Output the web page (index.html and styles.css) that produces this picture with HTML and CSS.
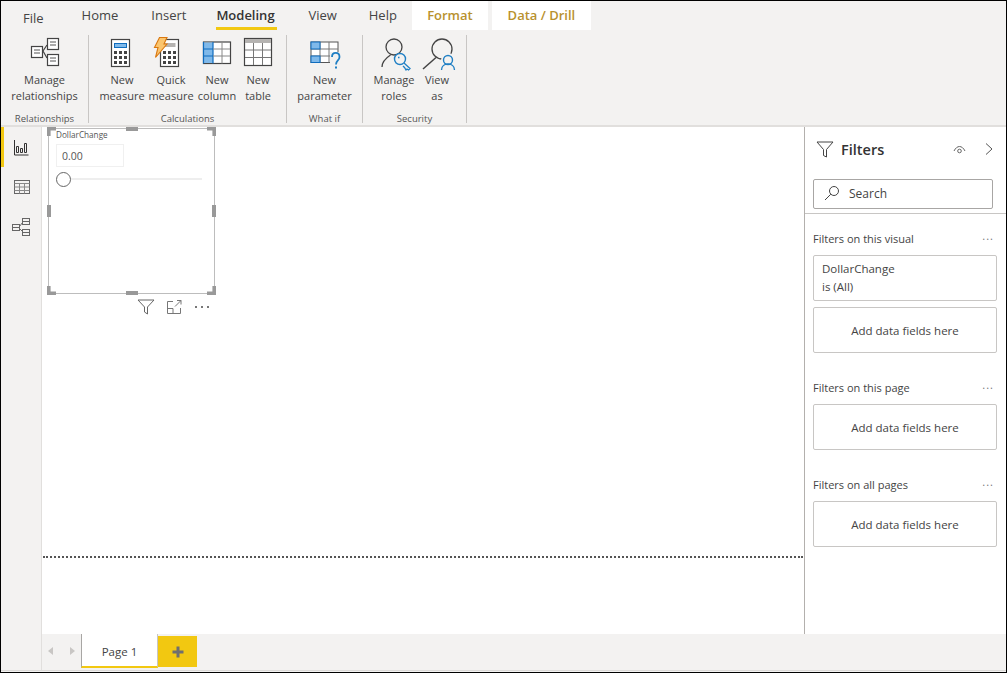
FILE: index.html
```html
<!doctype html>
<html lang="en">
  <head>
    <meta charset="UTF-8" />
    <meta name="viewport" content="width=device-width, initial-scale=1" />
    <title>Power BI Desktop</title>
    <link rel="stylesheet" href="styles.css">
  </head>
  <body>
    <div class="app">
      <!-- tabs -->
      <div class="tabs">
        <span class="tab tab-file">File</span>
        <span class="tab tab-home">Home</span>
        <span class="tab tab-insert">Insert</span>
        <span class="tab tab-modeling">Modeling</span>
        <span class="tab tab-view">View</span>
        <span class="tab tab-help">Help</span>
        <span class="tab tab-context tab-format">Format</span>
        <span class="tab tab-context tab-drill">Data / Drill</span>
      </div>

      <!-- ribbon -->
      <div class="ribbon">
        <div class="group group-rel">
          <div class="group-items">
            <div class="item item-rel">
              <svg class="icon" width="30" height="34" viewBox="0 0 30 34">
                <g fill="#fff" stroke="#444" stroke-width="1.2">
                  <rect x="1.5" y="10.5" width="11" height="11" />
                  <rect x="17.5" y="2.5" width="11" height="11" />
                  <rect x="17.5" y="18.5" width="11" height="11" />
                </g>
                <path d="M17 9 L13 15 L17 22" fill="none" stroke="#444" stroke-width="1.2" />
                <path d="M4 14h6M4 17h6M20 6h6M20 9h6M20 22h6M20 25h6" stroke="#555" stroke-width="1" />
              </svg>
              <span class="item-label">Manage<br>relationships</span>
            </div>
          </div>
          <div class="group-label">Relationships</div>
        </div>

        <div class="group group-calc">
          <div class="group-items">
            <div class="item item-measure">
              <svg class="icon" width="30" height="34" viewBox="0 0 30 34">
                <rect x="4.500" y="3.500" width="18" height="27" fill="#fff" stroke="#444" stroke-width="1.2" />
                <rect x="7.500" y="7.500" width="12" height="4" fill="#7fb9ea" stroke="#0f6cbd" />
                <path d="M7 15h3v3H7zM12 15h3v3h-3zM17 15h3v3h-3zM7 20h3v3H7zM12 20h3v3h-3zM17 20h3v3h-3zM7 25h3v3H7zM12 25h3v3h-3zM17 25h3v3h-3z" fill="#444" />
              </svg>
              <span class="item-label">New<br>measure</span>
            </div>
            <div class="item item-quick">
              <svg class="icon" width="30" height="34" viewBox="0 0 30 34">
                <rect x="4.500" y="3.500" width="18" height="27" fill="#fff" stroke="#444" stroke-width="1.2" />
                <rect x="7.500" y="7" width="12" height="4" fill="#b5b3b1" />
                <path d="M7 15h3v3H7zM12 15h3v3h-3zM17 15h3v3h-3zM7 20h3v3H7zM12 20h3v3h-3zM17 20h3v3h-3zM7 25h3v3H7zM12 25h3v3h-3zM17 25h3v3h-3z" fill="#444" />
                <path d="M3.500 1.500h7.500l-3 6.500h3L-0.500 21.500l2.500-10H-1.500z" fill="#fbc56d" stroke="#d9770f" stroke-width="1.100" />
              </svg>
              <span class="item-label">Quick<br>measure</span>
            </div>
            <div class="item item-column">
              <svg class="icon" width="30" height="34" viewBox="0 0 30 34">
                <rect x="1.500" y="6" width="27" height="21.500" fill="#fff" stroke="#444" stroke-width="1.2" />
                <rect x="2" y="6.500" width="9" height="20.500" fill="#7fb9ea" />
                <path d="M11 6v21.500M2 13h9M2 20h9" stroke="#0f6cbd" stroke-width="1.2" fill="none" />
                <path d="M20 6v21.500M11 13h17M11 20h17" stroke="#888" stroke-width="1" fill="none" />
                <path d="M1.500 6v21.500" stroke="#0f6cbd" stroke-width="1.2" />
              </svg>
              <span class="item-label">New<br>column</span>
            </div>
            <div class="item item-table">
              <svg class="icon" width="30" height="34" viewBox="0 0 30 34">
                <rect x="1.500" y="2.500" width="27" height="27" fill="#fff" stroke="#444" stroke-width="1.2" />
                <rect x="2" y="3" width="26" height="4" fill="#b5b3b1" />
                <path d="M10.500 7v22M19.500 7v22M2 14h26M2 21.500h26" stroke="#777" stroke-width="1" fill="none" />
              </svg>
              <span class="item-label">New<br>table</span>
            </div>
          </div>
          <div class="group-label">Calculations</div>
        </div>

        <div class="group group-whatif">
          <div class="group-items">
            <div class="item item-param">
              <svg class="icon" width="30" height="34" viewBox="0 0 30 34">
                <rect x="1" y="6" width="27" height="20.500" fill="#fff" stroke="#555" stroke-width="1" />
                <path d="M10 6v20.500M19 6v20.500M1 13h27M1 20h27" stroke="#777" stroke-width="1" fill="none" />
                <rect x="1" y="6" width="9" height="7" fill="#7fb9ea" stroke="#0f6cbd" />
                <rect x="1" y="20" width="9" height="6.500" fill="#7fb9ea" stroke="#0f6cbd" />
                <rect x="20" y="16" width="11" height="18" fill="#f3f2f1" />
                <path d="M22 21c0-5.500 7.500-5.500 7.500 0 0 3.500-3.500 3.500-3.500 7.500" fill="none" stroke="#1f7fc4" stroke-width="1.800" />
                <path d="M25 30.500h2v2h-2z" fill="#1f7fc4" />
              </svg>
              <span class="item-label">New<br>parameter</span>
            </div>
          </div>
          <div class="group-label">What if</div>
        </div>

        <div class="group group-security">
          <div class="group-items">
            <div class="item item-roles">
              <svg class="icon" width="30" height="34" viewBox="0 0 30 34">
                <circle cx="15" cy="11" r="8" fill="none" stroke="#444" stroke-width="1.300" />
                <path d="M3 31c0-5 4-9 8.500-12" fill="none" stroke="#444" stroke-width="1.300" />
                <circle cx="21" cy="23" r="5.500" fill="#f3f2f1" stroke="#1f7fc4" stroke-width="1.400" />
                <path d="M25 27l6 5.500-1.500 1.500-1.500-1-1 1-1.500-2.500-1.500-1.500" fill="#f3f2f1" stroke="#1f7fc4" stroke-width="1.300" />
                <path d="M19 21.500h1.500" stroke="#1f7fc4" stroke-width="1.400" />
              </svg>
              <span class="item-label">Manage<br>roles</span>
            </div>
            <div class="item item-viewas">
              <svg class="icon" width="34" height="34" viewBox="0 0 34 34">
                <circle cx="22" cy="13" r="10" fill="none" stroke="#444" stroke-width="1.300" />
                <path d="M16 21.500L3 33" fill="none" stroke="#444" stroke-width="1.500" />
                <circle cx="28" cy="24" r="7" fill="#f3f2f1" />
                <rect x="20" y="26" width="16" height="9" fill="#f3f2f1" />
                <circle cx="28" cy="24" r="4.500" fill="none" stroke="#1f7fc4" stroke-width="1.400" />
                <path d="M21.500 34c0-8 13-8 13 0" fill="none" stroke="#1f7fc4" stroke-width="1.400" />
              </svg>
              <span class="item-label">View<br>as</span>
            </div>
          </div>
          <div class="group-label">Security</div>
        </div>
      </div>

      <div class="main">
        <!-- left rail -->
        <div class="rail">
          <div class="rail-btn rail-active">
            <svg width="16" height="17" viewBox="0 0 16 17">
              <path d="M1.500 1v15h14" fill="none" stroke="#333" stroke-width="1" />
              <path d="M3.500 7.500h2v6h-2zM7.500 9.500h2v4h-2zM11.500 4.500h2v9h-2z" fill="none" stroke="#333" stroke-width="1" />
            </svg>
          </div>
          <div class="rail-btn">
            <svg width="17" height="16" viewBox="0 0 17 16">
              <rect x="1.500" y="1.500" width="15" height="13" fill="none" stroke="#666" />
              <path d="M1.500 4.500h15M1.500 8h15M1.500 11.500h15M6.500 4.500v10M11.500 4.500v10" stroke="#888" fill="none" />
            </svg>
          </div>
          <div class="rail-btn">
            <svg width="19" height="19" viewBox="0 0 19 19">
              <g fill="none" stroke="#666">
                <rect x="0.500" y="6.500" width="7" height="6" />
                <rect x="10.500" y="0.500" width="7" height="6" />
                <rect x="10.500" y="11.500" width="7" height="6" />
                <path d="M7.500 8.500l3-4M7.500 10.500l3 3M0.500 9.500h7M10.500 3.500h7M10.500 14.500h7" />
              </g>
            </svg>
          </div>
        </div>

        <div class="content">
          <div class="work">
            <!-- report canvas -->
            <div class="canvas">
              <div class="page-area">
                <div class="visual">
                  <span class="handle h-tl"></span><span class="handle h-tc"></span><span class="handle h-tr"></span>
                  <span class="handle h-ml"></span><span class="handle h-mr"></span>
                  <span class="handle h-bl"></span><span class="handle h-bc"></span><span class="handle h-br"></span>
                  <div class="slicer-title">DollarChange</div>
                  <div class="slicer-input">0.00</div>
                  <div class="slider"><span class="slider-thumb"></span></div>
                </div>
                <div class="visual-tools">
                  <svg width="18" height="16" viewBox="0 0 18 16">
                    <path d="M1 1h16l-6.500 7v7l-3-2V8z" fill="none" stroke="#666" />
                  </svg>
                  <svg width="15" height="14" viewBox="0 0 15 14">
                    <path d="M6 1.500H0.500v12h13V8M0.500 8.500H6v5M8 6.500l6-6M10 0.500h4v4" fill="none" stroke="#777" />
                  </svg>
                  <span class="dots">
                    <i></i><i></i><i></i>
                  </span>
                </div>
              </div>
            </div>

            <!-- filter pane -->
            <div class="filters">
              <div class="filters-head">
                <svg width="18" height="17" viewBox="0 0 18 17">
                  <path d="M1 1h16l-6.500 7.500V16l-3-1.500v-6z" fill="none" stroke="#444" />
                </svg>
                <span class="filters-title">Filters</span>
                <svg class="eye" width="13" height="9" viewBox="0 0 13 9">
                  <path d="M1 6c3-6 8-6 11 0" fill="none" stroke="#666" />
                  <circle cx="6.500" cy="6" r="1.800" fill="none" stroke="#666" />
                </svg>
                <svg width="8" height="12" viewBox="0 0 8 12">
                  <path d="M1 0.500l6 5.500-6 5.500" fill="none" stroke="#555" />
                </svg>
              </div>
              <div class="search">
                <svg width="16" height="16" viewBox="0 0 16 16">
                  <circle cx="10" cy="6" r="4.500" fill="none" stroke="#444" />
                  <path d="M6.800 9.200L1 15" fill="none" stroke="#444" />
                </svg>
                <span>Search</span>
              </div>
              <div class="filters-body">
                <div class="section">
                  <div class="section-head"><span>Filters on this visual</span><span class="more">...</span></div>
                  <div class="card card-field">DollarChange<br>is (All)</div>
                  <div class="card card-add">Add data fields here</div>
                </div>
                <div class="section">
                  <div class="section-head"><span>Filters on this page</span><span class="more">...</span></div>
                  <div class="card card-add">Add data fields here</div>
                </div>
                <div class="section">
                  <div class="section-head"><span>Filters on all pages</span><span class="more">...</span></div>
                  <div class="card card-add">Add data fields here</div>
                </div>
              </div>
            </div>
          </div>

          <!-- page tabs -->
          <div class="pagebar">
            <div class="page-nav">
              <span class="arrow arrow-left"></span>
              <span class="arrow arrow-right"></span>
            </div>
            <div class="page-tab">Page 1</div>
            <div class="page-add">
              <svg width="12" height="12" viewBox="0 0 12 12">
                <path d="M4.500 0.500h3v4h4v3h-4v4h-3v-4h-4v-3h4z" fill="#6f6f6f" />
              </svg>
            </div>
          </div>
        </div>
      </div>
      <div class="statusbar"></div>
    </div>
  </body>
</html>
```

FILE: styles.css
```css
* {
  box-sizing: border-box;
}
html,
body {
  margin: 0;
  padding: 0;
  overflow: hidden;
}
body {
  font-family: "Open Sans", "Noto Sans", Arial, sans-serif;
  color: #333;
  background: #fff;
}
svg {
  overflow: visible;
}
.app {
  width: 1007px;
  height: 673px;
  border: 1px solid #000;
  background: #f3f2f1;
  display: flex;
  flex-direction: column;
}

/* tabs */
.tabs {
  height: 29px;
  flex: none;
  display: flex;
  font-size: 13px;
  color: #444;
}
.tab {
  height: 29px;
  line-height: 28px;
  white-space: nowrap;
}
.tab-file {
  margin-left: 22px;
  padding-top: 3px;
}
.tab-home {
  margin-left: 38px;
}
.tab-insert {
  margin-left: 33px;
}
.tab-modeling {
  margin-left: 30px;
  width: 61px;
  font-weight: 600;
  color: #333;
  border-bottom: 3px solid #f2c811;
}
.tab-view {
  margin-left: 31px;
}
.tab-help {
  margin-left: 32px;
}
.tab-context {
  background: #fff;
  color: #b8912e;
  font-weight: 600;
  text-align: center;
}
.tab-format {
  margin-left: 15px;
  width: 76px;
}
.tab-drill {
  margin-left: 4px;
  width: 99px;
}

/* ribbon */
.ribbon {
  height: 97px;
  flex: none;
  display: flex;
  padding-top: 5px;
  border-bottom: 2px solid #e1dfdd;
  font-size: 11px;
  color: #444;
}
.group {
  height: 88px;
  border-right: 1px solid #c8c6c4;
  display: flex;
  flex-direction: column;
}
.group-rel {
  width: 88px;
}
.group-calc {
  width: 198px;
}
.group-whatif {
  width: 76px;
}
.group-security {
  width: 104px;
}
.group-items {
  flex: 1;
  display: flex;
}
.group-label {
  height: 10px;
  line-height: 11px;
  font-size: 9.500px;
  text-align: center;
  color: #555;
}
.item {
  display: flex;
  flex-direction: column;
  align-items: center;
  text-align: center;
  line-height: 16px;
  white-space: nowrap;
}
.icon {
  flex: none;
  margin-top: 1px;
  height: 34px;
}
.item-label {
  margin-top: 2px;
}
.item-rel {
  width: 87px;
}
.item-measure {
  width: 50px;
  margin-left: 8px;
}
.item-quick {
  width: 48px;
}
.item-column {
  width: 44px;
}
.item-table {
  width: 38px;
}
.item-param {
  width: 75px;
}
.item-roles {
  width: 46px;
  margin-left: 8px;
}
.item-viewas {
  width: 40px;
}

/* main */
.main {
  flex: 1;
  display: flex;
  min-height: 0;
}
.rail {
  width: 41px;
  flex: none;
  border-right: 1px solid #e1dfdd;
}
.rail-btn {
  height: 40px;
  display: flex;
  align-items: center;
  justify-content: center;
}
.rail-active {
  border-left: 3px solid #f2c811;
  padding-right: 3px;
}
.content {
  flex: 1;
  display: flex;
  flex-direction: column;
  min-width: 0;
}
.work {
  height: 507px;
  flex: none;
  display: flex;
  background: #fff;
}
.canvas {
  width: 762px;
  flex: none;
  padding: 0 1px;
}
.page-area {
  position: relative;
  height: 431px;
  border-bottom: 2px dotted #555;
}

/* slicer visual, sits freely on the report page */
.visual {
  position: absolute;
  left: 5px;
  top: 1px;
  width: 167px;
  height: 166px;
  border: 1px solid #bdbdbd;
  padding: 1px 7px;
}
.handle {
  position: absolute;
  background: #999;
}
.h-tl,
.h-tr,
.h-bl,
.h-br {
  width: 9px;
  height: 9px;
}
.h-tc,
.h-bc {
  width: 12px;
  height: 4px;
  left: 77px;
}
.h-ml,
.h-mr {
  width: 4px;
  height: 12px;
  top: 76px;
}
.h-tl {
  left: -2px;
  top: -2px;
  clip-path: polygon(0 0, 100% 0, 100% 40%, 40% 40%, 40% 100%, 0 100%);
}
.h-tr {
  right: -2px;
  top: -2px;
  clip-path: polygon(0 0, 100% 0, 100% 100%, 60% 100%, 60% 40%, 0 40%);
}
.h-bl {
  left: -2px;
  bottom: -2px;
  clip-path: polygon(0 0, 40% 0, 40% 60%, 100% 60%, 100% 100%, 0 100%);
}
.h-br {
  right: -2px;
  bottom: -2px;
  clip-path: polygon(60% 0, 100% 0, 100% 100%, 0 100%, 0 60%, 60% 60%);
}
.h-tc {
  top: -2px;
}
.h-bc {
  bottom: -2px;
}
.h-ml {
  left: -2px;
}
.h-mr {
  right: -2px;
}
.slicer-title {
  font-size: 8.200px;
  line-height: 10px;
  color: #555;
}
.slicer-input {
  margin-top: 4px;
  width: 68px;
  height: 23px;
  border: 1px solid #f0f0f0;
  font-size: 10.500px;
  line-height: 23px;
  padding-left: 5px;
  color: #555;
}
.slider {
  position: relative;
  margin-top: 11px;
  margin-left: 13px;
  width: 133px;
  height: 2px;
  background: #eee;
}
.slider-thumb {
  position: absolute;
  left: -13px;
  top: -6px;
  width: 15px;
  height: 15px;
  border: 1.500px solid #666;
  border-radius: 50%;
  background: #fff;
}
.visual-tools {
  position: absolute;
  left: 94px;
  top: 172px;
  display: flex;
  align-items: center;
  gap: 12px;
}
.dots {
  display: flex;
  gap: 4px;
  margin-left: 1px;
}
.dots i {
  width: 2px;
  height: 2px;
  background: #777;
}

/* filter pane */
.filters {
  flex: 1;
  border-left: 1px solid #b3b0ad;
  min-width: 0;
}
.filters-head {
  height: 52px;
  display: flex;
  align-items: center;
  padding: 0 13px 8px 11px;
}
.filters-title {
  margin-left: 7px;
  font-size: 14.500px;
  font-weight: 600;
  flex: 1;
}
.eye {
  margin-right: 19px;
}
.search {
  margin: 0 13px 0 8px;
  height: 30px;
  border: 1px solid #a8a6a4;
  border-radius: 2px;
  display: flex;
  align-items: center;
  gap: 9px;
  padding: 0 0 2px 10px;
  font-size: 12px;
  color: #444;
}
.filters-body {
  margin-top: 4px;
  border-top: 1px solid #c8c6c4;
  padding: 0 9px 0 8px;
}
.section {
  padding-top: 16px;
  margin-bottom: 10px;
}
.section-head {
  display: flex;
  justify-content: space-between;
  height: 17px;
  line-height: 17px;
  font-size: 11px;
  color: #444;
}
.more {
  color: #777;
  margin-right: 3px;
  letter-spacing: 1px;
  line-height: 12px;
}
.card {
  margin-top: 8px;
  border: 1px solid #c8c6c4;
  border-radius: 2px;
  height: 46px;
  font-size: 11.500px;
  color: #444;
}
.card-field {
  padding: 4px 8px 0;
  line-height: 18px;
}
.card-add + .card-add,
.card-field + .card-add {
  margin-top: 6px;
}
.card-add {
  display: flex;
  align-items: center;
  justify-content: center;
}

/* page tabs */
.pagebar {
  flex: 1;
  display: flex;
  align-items: flex-start;
}
.page-nav {
  width: 39px;
  height: 33px;
  display: flex;
  align-items: center;
  gap: 17px;
  padding-left: 6px;
}
.arrow {
  width: 0;
  height: 0;
  border-top: 4.500px solid transparent;
  border-bottom: 4.500px solid transparent;
}
.arrow-left {
  border-right: 5px solid #c8c6c4;
}
.arrow-right {
  border-left: 5px solid #c8c6c4;
}
.page-tab {
  width: 77px;
  height: 34px;
  background: #fff;
  border-left: 1px solid #a8a6a4;
  border-right: 1px solid #c8c6c4;
  border-bottom: 2px solid #f2c811;
  text-align: center;
  font-size: 11.500px;
  line-height: 35px;
  color: #444;
}
.page-add {
  width: 39px;
  height: 31px;
  margin-top: 2px;
  background: #f2c811;
  display: flex;
  align-items: center;
  justify-content: center;
}
.statusbar {
  height: 2px;
  flex: none;
  border-top: 1px solid #dcdad8;
}
```
